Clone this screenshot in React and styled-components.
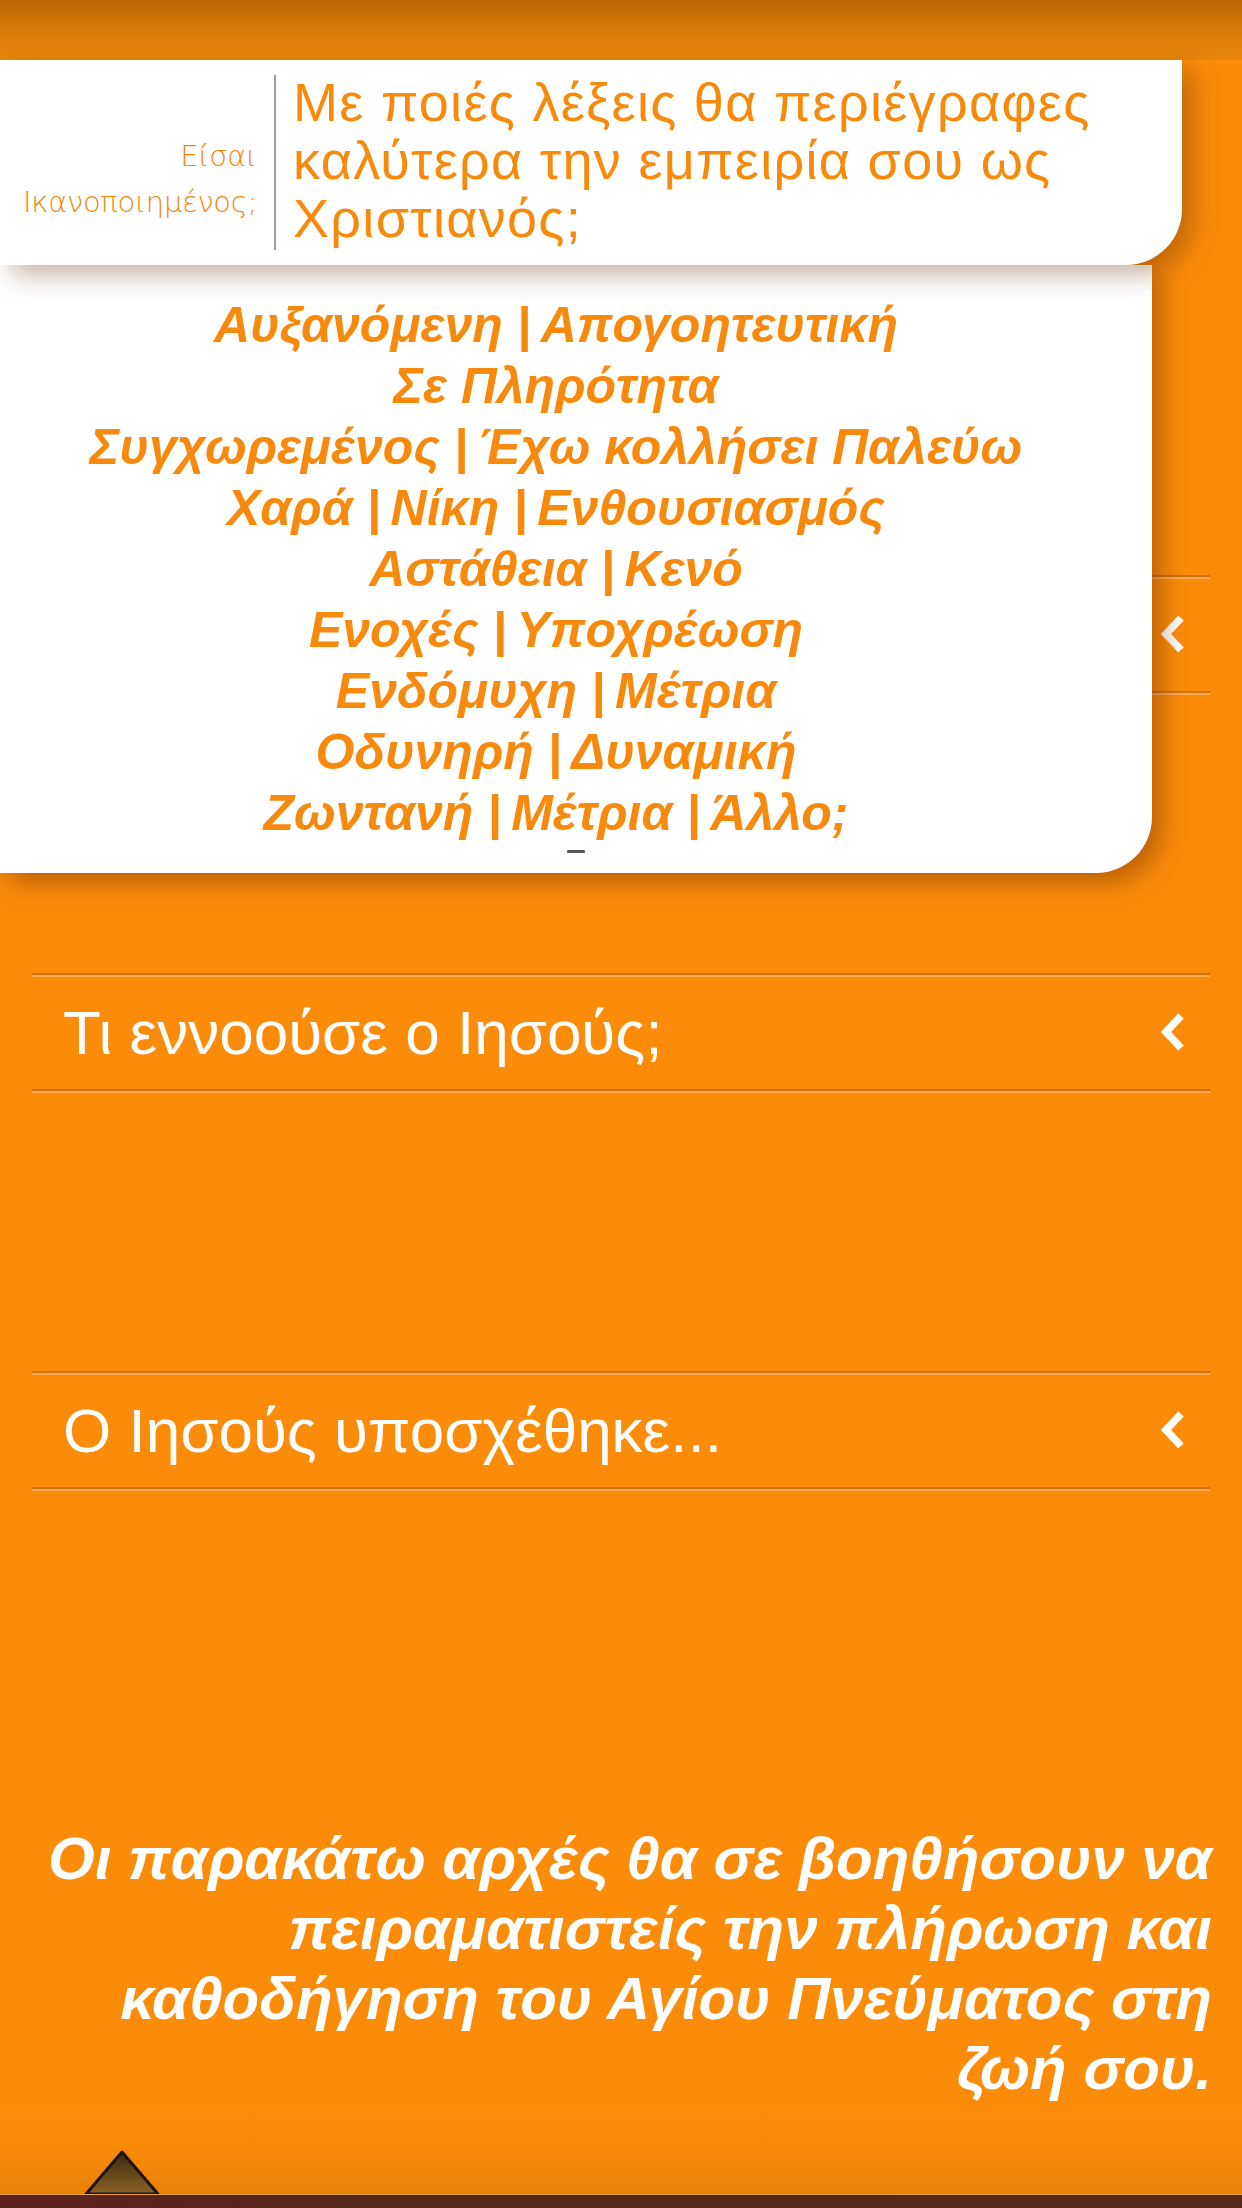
import React from 'react'
import styled, { createGlobalStyle } from 'styled-components'

const GlobalStyle = createGlobalStyle`
  html, body {
    margin: 0;
    padding: 0;
    background: #fb8c0a;
  }
  body {
    font-family: "Liberation Sans", Arial, sans-serif;
  }
`

const Page = styled.div`
  position: relative;
  width: 1242px;
  height: 2208px;
  display: flex;
  flex-direction: column;
  background: #fb8c0a;
  overflow: hidden;
`

const TopShade = styled.div`
  height: 60px;
  flex: none;
  background: linear-gradient(to bottom, #bb6606 0%, #df7f0a 65%, #e9860a 100%);
`

const Accordion = styled.div`
  padding-top: 515px;
`

const ItemHeader = styled.div`
  height: 114px;
  margin: 0 32px;
  padding: 0 24px 0 31px;
  display: flex;
  align-items: center;
  justify-content: space-between;
  border-top: 2px solid #d0710a;
  border-bottom: 2px solid #d0710a;
  box-shadow: inset 0 2px 0 #fdac52, 0 2px 0 #fdac52;
  color: #fff;
  font-size: 62px;
`

const ItemBody = styled.div`
  height: 280px;
`

const Chevron = styled.svg`
  width: 28px;
  height: 40px;
  flex: none;
`

const Note = styled.p`
  margin: 55px 30px 0 36px;
  text-align: right;
  color: #fff;
  font-weight: bold;
  font-style: italic;
  font-size: 60px;
  line-height: 70px;
`

const Footer = styled.footer`
  margin-top: auto;
  height: 106px;
  flex: none;
  display: flex;
  flex-direction: column;
  justify-content: flex-end;
  background: linear-gradient(to bottom, #fb8d0b 0%, #f88a0a 40%, #e47e08 100%);
`

const Pyramid = styled.svg`
  display: block;
  margin-left: 84px;
  width: 76px;
  height: 45px;
`

const Bar = styled.div`
  height: 15px;
  border-top: 1px solid #e3a24a;
  background: linear-gradient(to right, #5e2120, #55281a 30%, #57291a);
`

const Popover = styled.div`
  position: absolute;
  top: 60px;
  left: 0;
  display: flex;
  flex-direction: column;
`

const QuestionCard = styled.div`
  position: relative;
  z-index: 2;
  box-sizing: border-box;
  width: 1182px;
  height: 205px;
  display: flex;
  align-items: center;
  background: #fff;
  border-bottom-right-radius: 56px;
  box-shadow: 12px 10px 26px rgba(90, 40, 0, 0.35);
`

const Label = styled.div`
  width: 257px;
  padding-top: 32px;
  text-align: right;
  color: #f2870c;
  font-family: "DejaVu Sans", sans-serif;
  font-weight: 200;
  font-size: 29px;
  line-height: 46px;
  letter-spacing: -0.3px;
  white-space: nowrap;
`

const Separator = styled.div`
  align-self: stretch;
  width: 2px;
  margin: 15px 17px;
  background: #9c9c9c;
`

const Question = styled.div`
  flex: 1;
  padding: 0 24px 6px 0;
  color: #f7890b;
  font-size: 54px;
  line-height: 58px;
  letter-spacing: 1.3px;
`

const OptionsCard = styled.div`
  position: relative;
  z-index: 1;
  box-sizing: border-box;
  width: 1152px;
  height: 608px;
  padding: 30px 40px 0 0;
  background: #fff;
  border-bottom-right-radius: 56px;
  box-shadow: 10px 10px 26px rgba(110, 45, 0, 0.45);
  text-align: center;
`

const Option = styled.div`
  color: #f7890c;
  font-weight: bold;
  font-style: italic;
  font-size: 50px;
  line-height: 61px;
  white-space: nowrap;
`

const Caret = styled.div`
  width: 18px;
  height: 3px;
  margin: 6px auto 0;
  transform: translateX(20px);
  background: #555;
  border-radius: 1px;
`

// thin space after each pipe, as in the screenshot
const options = [
  'Αυξανόμενη |\u2009Απογοητευτική',
  'Σε Πληρότητα',
  'Συγχωρεμένος |\u2009Έχω κολλήσει Παλεύω',
  'Χαρά |\u2009Νίκη |\u2009Ενθουσιασμός',
  'Αστάθεια |\u2009Κενό',
  'Ενοχές |\u2009Υποχρέωση',
  'Ενδόμυχη |\u2009Μέτρια',
  'Οδυνηρή |\u2009Δυναμική',
  'Ζωντανή |\u2009Μέτρια |\u2009Άλλο;',
]

const sections = [
  '',
  'Τι εννοούσε ο Ιησούς;',
  'Ο Ιησούς υποσχέθηκε...',
]

const ChevronLeft = () => (
  <Chevron viewBox="0 0 28 40">
    <polyline points="23,4 8,20 23,36" fill="none" stroke="#fff" strokeWidth="7.5" strokeLinejoin="miter" />
  </Chevron>
)

const App = () => {
  return (
    <>
      <GlobalStyle />
      <Page>
        <TopShade />
        <Accordion>
          {sections.map((title, i) => (
            <section key={i}>
              <ItemHeader>
                <span>{title}</span>
                <ChevronLeft />
              </ItemHeader>
              <ItemBody />
            </section>
          ))}
        </Accordion>

        <Note>
          Οι παρακάτω αρχές θα σε βοηθήσουν να πειραματιστείς την πλήρωση και
          καθοδήγηση του Αγίου Πνεύματος στη ζωή σου.
        </Note>

        <Footer>
          <Pyramid viewBox="0 0 76 45">
            <defs>
              <linearGradient id="pyr" x1="0" y1="0" x2="0" y2="1">
                <stop offset="0" stopColor="#3a2810" />
                <stop offset="1" stopColor="#8c6224" />
              </linearGradient>
            </defs>
            <polygon points="38,3 2,45 74,45" fill="url(#pyr)" stroke="#1e1408" strokeWidth="3" strokeLinejoin="round" />
          </Pyramid>
          <Bar />
        </Footer>

        <Popover>
          <QuestionCard>
            <Label>
              Είσαι
              <br />
              Ικανοποιημένος;
            </Label>
            <Separator />
            <Question>
              Με ποιές λέξεις θα περιέγραφες καλύτερα την εμπειρία σου ως Χριστιανός;
            </Question>
          </QuestionCard>
          <OptionsCard>
            {options.map((o) => (
              <Option key={o}>{o}</Option>
            ))}
            <Caret />
          </OptionsCard>
        </Popover>
      </Page>
    </>
  )
}

export default App
